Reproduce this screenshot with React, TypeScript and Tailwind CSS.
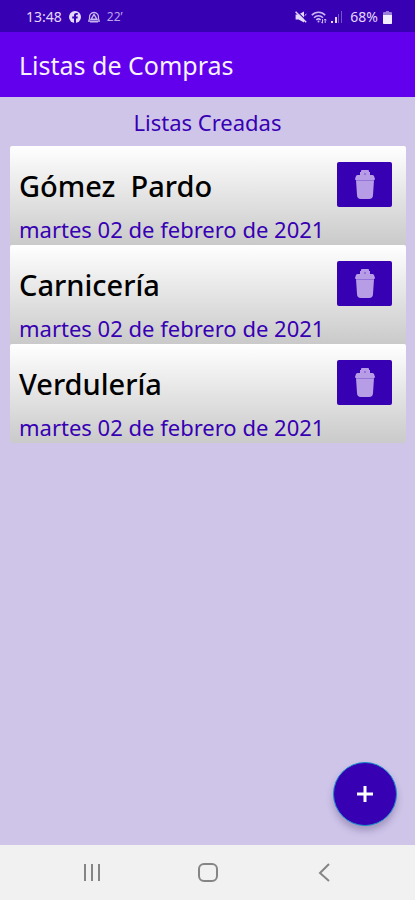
const lists = [
  { name: "Gómez  Pardo", date: "martes 02 de febrero de 2021" },
  { name: "Carnicería", date: "martes 02 de febrero de 2021" },
  { name: "Verdulería", date: "martes 02 de febrero de 2021" },
];

function FacebookIcon() {
  return (
    <svg width="12" height="12" viewBox="0 0 12 12" aria-hidden="true">
      <circle cx="6" cy="6" r="6" fill="#e3d8fa" />
      <path d="M5 12V7.5H3.2V5.5H5V4.3C5 2.8 6 2 7.4 2h1.4v1.8H7.9c-.6 0-.9.3-.9.8v.9h1.8l-.3 2H7V12Z" fill="#3700b3" />
    </svg>
  );
}

function DriveIcon() {
  return (
    <svg width="12" height="12" viewBox="0 0 12 12" fill="none" stroke="#c9b8f0" aria-hidden="true">
      <path d="M1.6 7.2a4.5 4.8 0 1 1 8.8 0L11.3 10.2H.7Z" strokeWidth="1.2" />
      <path d="M6 3.4 8.9 8.2H3.1Z" strokeWidth="1.4" />
      <path d="M2 10.8h8" strokeWidth="1.4" />
    </svg>
  );
}

function MuteIcon() {
  return (
    <svg width="12" height="12" viewBox="0 0 12 12" aria-hidden="true">
      <path d="M.6 3.6h3L9 .4v11L3.6 8.4h-3Z" fill="#e3d8fa" />
      <path d="M1.4 0 12 10.2" stroke="#3700b3" strokeWidth="1.2" />
      <path d="M.6.8 11.2 11.2" stroke="#e3d8fa" strokeWidth="1.5" />
      <path d="m9.6 4.6 1.8-1.4" stroke="#e3d8fa" />
    </svg>
  );
}

function WifiIcon() {
  return (
    <svg width="16" height="13" viewBox="0 0 16 13" fill="none" stroke="#c9b8f0" strokeWidth="1.6" aria-hidden="true">
      <path d="M.8 4.3c3.7-4 9.7-4 13.4 0M3 6.7c2.6-2.7 6.4-2.7 9 0M5.3 9c1.3-1.3 3.1-1.3 4.4 0" />
      <circle cx="7.5" cy="10.6" r="1" fill="#c9b8f0" stroke="none" />
      <path d="M11.5 8.2v4M10.2 10.8l1.3 1.4M14.2 12V8M13 9.3 14.2 8l1.2 1.3" strokeWidth="1" />
    </svg>
  );
}

function SignalIcon() {
  return (
    <svg width="12" height="12" viewBox="0 0 12 12" aria-hidden="true">
      <path d="M0 10h2v2H0zM4 6h2v6H4z" fill="#e3d8fa" />
      <path d="M7 3h1v9H7zM10 0h1v12h-1z" fill="#7854cb" />
    </svg>
  );
}

function BatteryIcon() {
  return (
    <svg width="9" height="13" viewBox="0 0 9 13" aria-hidden="true">
      <path d="M3 0h3v2H3z" fill="#9a7ddb" />
      <rect y="1" width="9" height="12" rx="1" fill="#9a7ddb" />
      <path d="M0 4h9v8a1 1 0 0 1-1 1H1a1 1 0 0 1-1-1Z" fill="#f2ecff" />
    </svg>
  );
}

function TrashIcon() {
  return (
    <svg width="22" height="30" viewBox="0 0 22 30" aria-hidden="true">
      <path d="M6 5V2h1V1a1 1 0 0 1 1-1h6a1 1 0 0 1 1 1v1h1v3Z" fill="#b79ce6" />
      <path d="M4 5h14a2 2 0 0 1 2 1l1 3a1 1 0 0 1-1 1H2a1 1 0 0 1-1-1l1-3a2 2 0 0 1 2-1Z" fill="#b79ce6" />
      <path d="M2 10h18l-1 15a4 4 0 0 1-4 4H7a4 4 0 0 1-4-4Z" fill="#b79ce6" />
      <path d="M2 10.5h18" stroke="#9576d8" />
      <circle cx="11" cy="4" r="1" fill="#8a66d2" />
    </svg>
  );
}

export default function App() {
  return (
    <div className="flex min-h-screen flex-col bg-[#cfc5e9] font-['Noto_Sans',sans-serif]">
      <div className="flex h-8 items-center justify-between bg-[#3700b3] pt-[2px] pr-[23px] pl-[26px] text-sm text-[#e3d8fa]">
        <div className="flex items-center gap-[7px]">
          <span>13:48</span>
          <FacebookIcon />
          <DriveIcon />
          <span className="text-xs text-[#b9a4ec]">22&#8217;</span>
        </div>
        <div className="flex items-center">
          <MuteIcon />
          <span className="ml-1"><WifiIcon /></span>
          <span className="ml-1"><SignalIcon /></span>
          <span className="ml-[7px]">68%</span>
          <span className="ml-[5px]"><BatteryIcon /></span>
        </div>
      </div>

      <header className="flex h-[65px] items-center bg-[#6200ee] px-[19px] pt-[2px]">
        <h1 className="text-[25px] text-[#f8f2ff]">Listas de Compras</h1>
      </header>

      <main className="relative flex-1 px-[9px] pt-2">
        <h2 className="pt-px pb-[7px] text-center text-[22px] leading-[33px] text-[#3700b3]">Listas Creadas</h2>
        <ul className="pl-px">
          {lists.map((list) => (
            <li
              key={list.name}
              className="flex items-start justify-between rounded-xs bg-linear-to-b from-white to-[#cacaca] pt-[15px] pr-[14px] pl-[9px]"
            >
              <div className="whitespace-pre">
                <h3 className="text-[29px] leading-[50px] font-medium text-black">{list.name}</h3>
                <p className="pt-[2px] text-[22px] leading-8 text-[#3700b3]">{list.date}</p>
              </div>
              <button
                type="button"
                aria-label={`Eliminar ${list.name}`}
                className="mt-px flex h-[45px] w-[55px] items-center justify-center rounded-xs bg-[#3700b3]"
              >
                <TrashIcon />
              </button>
            </li>
          ))}
        </ul>
        <button
          type="button"
          aria-label="Agregar lista"
          className="absolute right-[18px] bottom-[19px] flex size-16 items-center justify-center rounded-full border border-[#168dca] bg-[#3700b3] shadow-[0_5px_7px_rgba(60,40,100,0.3)]"
        >
          <svg width="16" height="16" viewBox="0 0 16 16" stroke="white" strokeWidth="3" aria-hidden="true">
            <path d="M8 0v16M0 8h16" />
          </svg>
        </button>
      </main>

      <nav className="flex h-[55px] items-center justify-center gap-24 bg-[#f1f1f1]">
        <button type="button" aria-label="Recientes">
          <svg width="20" height="20" viewBox="0 0 20 20" stroke="#858585" strokeWidth="2" aria-hidden="true">
            <path d="M3 1v17M10 1v17M17 1v17" />
          </svg>
        </button>
        <button type="button" aria-label="Inicio">
          <svg width="20" height="20" viewBox="0 0 20 20" fill="none" stroke="#858585" strokeWidth="2" aria-hidden="true">
            <rect x="1" y="1" width="18" height="17" rx="5" />
          </svg>
        </button>
        <button type="button" aria-label="Atrás">
          <svg width="20" height="20" viewBox="0 0 20 20" fill="none" stroke="#858585" strokeWidth="2" aria-hidden="true">
            <path d="m15 1-9 9 9 8" />
          </svg>
        </button>
      </nav>
    </div>
  );
}
